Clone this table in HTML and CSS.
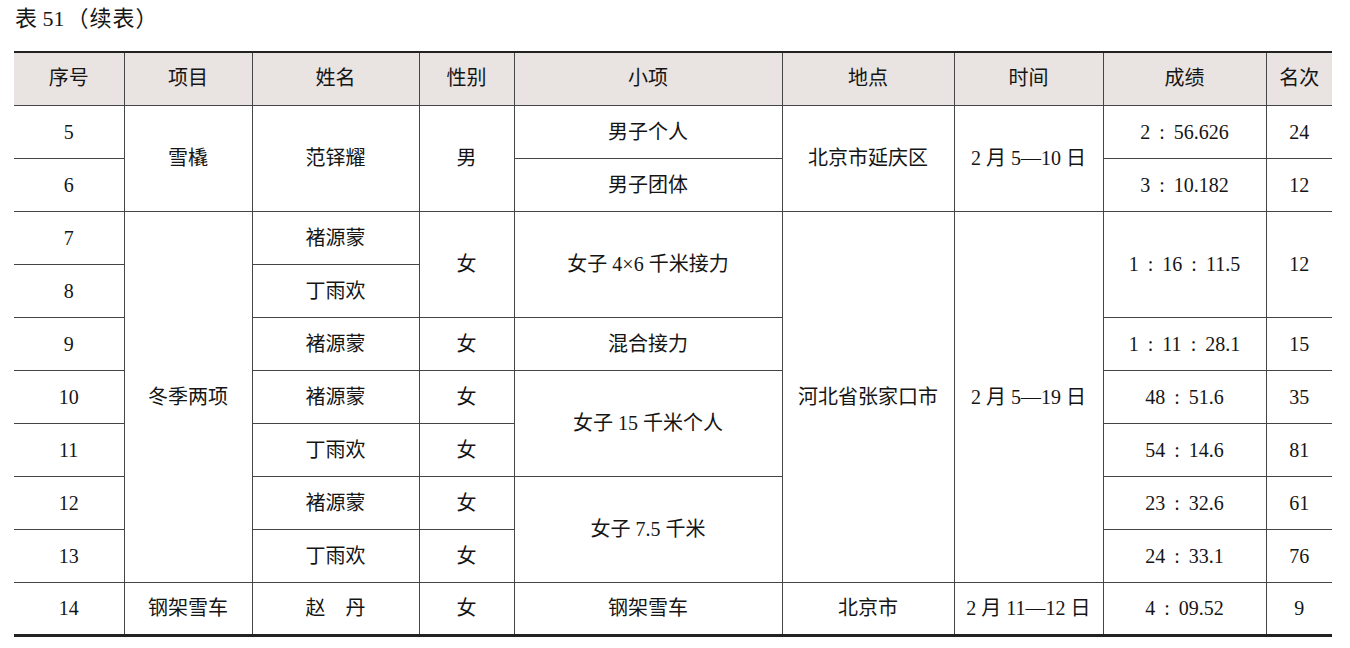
FILE: index.html
```html
<!DOCTYPE html>
<html lang="zh">
<head>
<meta charset="utf-8">
<title>表 51（续表）</title>
<link rel="stylesheet" href="styles.css">
</head>
<body>
<div class="caption">表 51<span class="paren">（续表）</span></div>
<table class="results">
  <colgroup>
    <col class="c1"><col class="c2"><col class="c3"><col class="c4"><col class="c5"><col class="c6"><col class="c7"><col class="c8"><col class="c9">
  </colgroup>
  <thead>
    <tr>
      <th>序号</th><th>项目</th><th>姓名</th><th>性别</th><th>小项</th><th>地点</th><th>时间</th><th>成绩</th><th>名次</th>
    </tr>
  </thead>
  <tbody>
    <tr>
      <td>5</td>
      <td rowspan="2">雪橇</td>
      <td rowspan="2">范铎耀</td>
      <td rowspan="2">男</td>
      <td>男子个人</td>
      <td rowspan="2">北京市延庆区</td>
      <td rowspan="2">2 月 5—10 日</td>
      <td>2<span class="colon">:</span>56.626</td>
      <td>24</td>
    </tr>
    <tr>
      <td>6</td>
      <td>男子团体</td>
      <td>3<span class="colon">:</span>10.182</td>
      <td>12</td>
    </tr>
    <tr>
      <td>7</td>
      <td rowspan="7">冬季两项</td>
      <td>褚源蒙</td>
      <td rowspan="2">女</td>
      <td rowspan="2">女子 4×6 千米接力</td>
      <td rowspan="7">河北省张家口市</td>
      <td rowspan="7">2 月 5—19 日</td>
      <td rowspan="2">1<span class="colon">:</span>16<span class="colon">:</span>11.5</td>
      <td rowspan="2">12</td>
    </tr>
    <tr>
      <td>8</td>
      <td>丁雨欢</td>
    </tr>
    <tr>
      <td>9</td>
      <td>褚源蒙</td>
      <td>女</td>
      <td>混合接力</td>
      <td>1<span class="colon">:</span>11<span class="colon">:</span>28.1</td>
      <td>15</td>
    </tr>
    <tr>
      <td>10</td>
      <td>褚源蒙</td>
      <td>女</td>
      <td rowspan="2">女子 15 千米个人</td>
      <td>48<span class="colon">:</span>51.6</td>
      <td>35</td>
    </tr>
    <tr>
      <td>11</td>
      <td>丁雨欢</td>
      <td>女</td>
      <td>54<span class="colon">:</span>14.6</td>
      <td>81</td>
    </tr>
    <tr>
      <td>12</td>
      <td>褚源蒙</td>
      <td>女</td>
      <td rowspan="2">女子 7.5 千米</td>
      <td>23<span class="colon">:</span>32.6</td>
      <td>61</td>
    </tr>
    <tr>
      <td>13</td>
      <td>丁雨欢</td>
      <td>女</td>
      <td>24<span class="colon">:</span>33.1</td>
      <td>76</td>
    </tr>
    <tr class="last">
      <td>14</td>
      <td>钢架雪车</td>
      <td>赵　丹</td>
      <td>女</td>
      <td>钢架雪车</td>
      <td>北京市</td>
      <td>2 月 11—12 日</td>
      <td>4<span class="colon">:</span>09.52</td>
      <td>9</td>
    </tr>
  </tbody>
</table>
</body>
</html>
```

FILE: styles.css
```css
html, body {
  margin: 0;
  padding: 0;
  background: #ffffff;
}

body {
  padding: 5px 18px 0 14px;
  font-family: "Liberation Serif", "Noto Sans CJK SC", serif;
  color: #151515;
}

.caption {
  font-size: 22px;
  line-height: 28px;
  height: 28px;
  margin-bottom: 18px;
  padding-left: 1px;
}

.caption .paren {
  margin-left: 2px;
  letter-spacing: 1px;
}

.results {
  border-collapse: collapse;
  table-layout: fixed;
  width: 1318px;
  font-size: 20px;
}

.c1 { width: 110px; }
.c2 { width: 128px; }
.c3 { width: 167px; }
.c4 { width: 95px; }
.c5 { width: 268px; }
.c6 { width: 172px; }
.c7 { width: 149px; }
.c8 { width: 163px; }
.c9 { width: 66px; }

.results th,
.results td {
  border: 1px solid #454545;
  text-align: center;
  vertical-align: middle;
  padding: 0;
  font-weight: normal;
  line-height: 24px;
}

.results tr {
  height: 53px;
}

.results thead th {
  background: #e9e3e1;
  border-top: 2px solid #222222;
  padding-bottom: 2px;
}

.colon {
  margin: 0 9px;
}

.results tr > :first-child {
  border-left: none;
}

.results tr > :last-child {
  border-right: none;
}

.results tr.last td {
  border-bottom: 3px solid #222222;
}
```
